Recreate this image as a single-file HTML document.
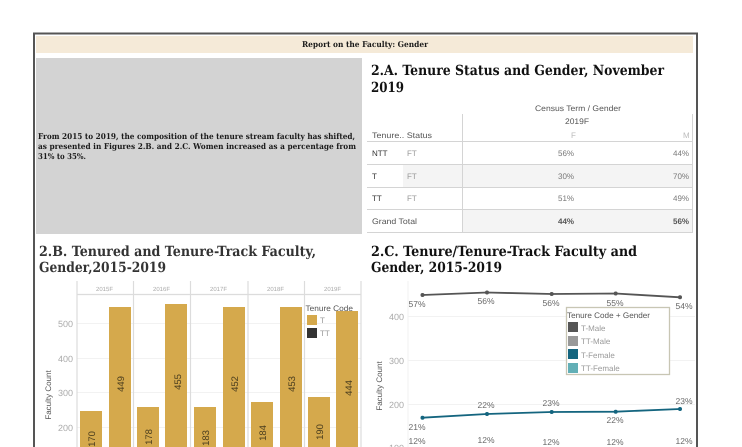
<!DOCTYPE html>
<html><head><meta charset="utf-8"><style>
html,body{margin:0;padding:0;background:#fff;width:742px;height:447px;overflow:hidden}
svg{display:block;position:absolute;left:0;top:0;filter:blur(0.35px)}
.h{font:bold 14px "DejaVu Serif",serif;fill:#111}
.b{font:bold 8px "DejaVu Serif",serif;fill:#1a1a1a}
.s{font:8px "Liberation Sans",sans-serif;fill:#777}
.d{font:8px "Liberation Sans",sans-serif;fill:#333}
.y{font:9px "Liberation Sans",sans-serif;fill:#aaa}
.t{font:6px "Liberation Sans",sans-serif;fill:#aaa}
.v{font:9.5px "Liberation Sans",sans-serif;fill:#4a3d1e}
.p{font:8.5px "Liberation Sans",sans-serif;fill:#666}
.l{font:8px "Liberation Sans",sans-serif;fill:#999}
</style></head><body>
<svg width="742" height="447" viewBox="0 0 742 447" xmlns="http://www.w3.org/2000/svg" text-rendering="geometricPrecision">
<rect width="742" height="447" fill="#fff"/>
<path d="M34 447V33.5H697V447" fill="none" stroke="#555" stroke-width="2"/>
<rect x="36" y="36" width="657" height="17" fill="#f5ead8"/>
<text class="b" x="302" y="47" textLength="126" lengthAdjust="spacingAndGlyphs">Report on the Faculty: Gender</text>
<rect x="36" y="58" width="326" height="176" fill="#d3d3d3"/>
<text class="b" x="38" y="139" textLength="317" lengthAdjust="spacingAndGlyphs">From 2015 to 2019, the composition of the tenure stream faculty has shifted,</text>
<text class="b" x="38" y="149" textLength="318" lengthAdjust="spacingAndGlyphs">as presented in Figures 2.B. and 2.C. Women increased as a percentage from</text>
<text class="b" x="38" y="159" textLength="48" lengthAdjust="spacingAndGlyphs">31% to 35%.</text>

<text class="h" x="371" y="75" textLength="293" lengthAdjust="spacingAndGlyphs">2.A. Tenure Status and Gender, November</text>
<text class="h" x="371" y="92" textLength="33" lengthAdjust="spacingAndGlyphs">2019</text>
<rect x="403" y="164" width="290" height="23" fill="#f4f4f4"/>
<rect x="462" y="209" width="231" height="23" fill="#f4f4f4"/>
<g stroke="#d4d4d4" fill="none"><path d="M367 141.5H693M367 164.5H693M367 187.5H693M367 209.5H693M367 232.5H693M462.5 114V232M692.5 114V232"/></g>
<text class="s" x="535" y="111" textLength="86" lengthAdjust="spacingAndGlyphs" style="fill:#555">Census Term / Gender</text>
<text class="s" x="565" y="124" textLength="24" lengthAdjust="spacingAndGlyphs" style="fill:#555">2019F</text>
<text class="s" x="372" y="138" textLength="60" lengthAdjust="spacingAndGlyphs" style="fill:#555">Tenure.. Status</text>
<text class="s" x="571" y="138" style="fill:#bbb">F</text><text class="s" x="683" y="138" style="fill:#bbb">M</text>
<text class="d" x="372" y="156">NTT</text><text class="s" x="407" y="156" style="fill:#999">FT</text><text class="s" x="558" y="156">56%</text><text class="s" x="673" y="156">44%</text>
<text class="d" x="372" y="179">T</text><text class="s" x="407" y="179" style="fill:#999">FT</text><text class="s" x="558" y="179">30%</text><text class="s" x="673" y="179">70%</text>
<text class="d" x="372" y="201">TT</text><text class="s" x="407" y="201" style="fill:#999">FT</text><text class="s" x="558" y="201">51%</text><text class="s" x="673" y="201">49%</text>
<text class="s" x="372" y="224" textLength="45" lengthAdjust="spacingAndGlyphs" style="fill:#555">Grand Total</text><text class="s" x="558" y="224" style="fill:#555;font-weight:bold">44%</text><text class="s" x="673" y="224" style="fill:#555;font-weight:bold">56%</text>

<text class="h" x="39" y="256" textLength="277" lengthAdjust="spacingAndGlyphs" style="fill:#333">2.B. Tenured and Tenure-Track Faculty,</text>
<text class="h" x="39" y="272" textLength="127" lengthAdjust="spacingAndGlyphs" style="fill:#333">Gender,2015-2019</text>
<g stroke="#f2f2f2" fill="none"><path d="M77 323.5H361M77 358.5H361M77 392.5H361M77 427.5H361"/></g>
<g stroke="#dcdcdc" stroke-width="1.2" fill="none"><path d="M77 294.5H361M77 281V447M133.5 281V447M190.5 281V447M248 281V447M304.5 281V447M361 281V447"/></g>
<text class="t" x="96" y="291">2015F</text><text class="t" x="153" y="291">2016F</text><text class="t" x="210" y="291">2017F</text><text class="t" x="267" y="291">2018F</text><text class="t" x="324" y="291">2019F</text>
<text class="y" x="58" y="327">500</text><text class="y" x="58" y="362">400</text><text class="y" x="58" y="396">300</text><text class="y" x="58" y="431">200</text>
<text class="s" transform="translate(51,395) rotate(-90)" text-anchor="middle" style="fill:#555">Faculty Count</text>
<g fill="#d5a94c"><rect x="80" y="411" width="22" height="36"/><rect x="109" y="307" width="22" height="140"/><rect x="137" y="407" width="22" height="40"/><rect x="165" y="304" width="22" height="143"/><rect x="194" y="407" width="22" height="40"/><rect x="223" y="307" width="22" height="140"/><rect x="251" y="402" width="22" height="45"/><rect x="280" y="307" width="22" height="140"/><rect x="308" y="397" width="22" height="50"/><rect x="336" y="311" width="22" height="136"/></g>
<g text-anchor="middle">
<text class="v" transform="translate(95,439) rotate(-90)">170</text>
<text class="v" transform="translate(124,384) rotate(-90)">449</text>
<text class="v" transform="translate(152,437) rotate(-90)">178</text>
<text class="v" transform="translate(181,382) rotate(-90)">455</text>
<text class="v" transform="translate(209,438) rotate(-90)">183</text>
<text class="v" transform="translate(238,384) rotate(-90)">452</text>
<text class="v" transform="translate(266,433) rotate(-90)">184</text>
<text class="v" transform="translate(295,384) rotate(-90)">453</text>
<text class="v" transform="translate(323,432) rotate(-90)">190</text>
<text class="v" transform="translate(352,388) rotate(-90)">444</text>
</g>
<text class="s" x="305.5" y="311" textLength="47.5" lengthAdjust="spacingAndGlyphs" style="fill:#555">Tenure Code</text>
<rect x="307" y="315" width="10" height="10" fill="#d5a94c"/><rect x="307" y="328" width="10" height="10" fill="#333"/>
<text class="l" x="320" y="323">T</text><text class="l" x="320" y="336">TT</text>

<text class="h" x="371" y="256" textLength="266" lengthAdjust="spacingAndGlyphs">2.C. Tenure/Tenure-Track Faculty and</text>
<text class="h" x="371" y="272" textLength="131" lengthAdjust="spacingAndGlyphs">Gender, 2015-2019</text>
<g stroke="#f2f2f2" fill="none"><path d="M408 316.5H695M408 360.5H695M408 404.5H695M408 281V447"/></g>
<text class="y" x="389" y="320">400</text><text class="y" x="389" y="364">300</text><text class="y" x="389" y="408">200</text>
<text class="y" x="389" y="451">100</text>
<text class="s" transform="translate(382,386) rotate(-90)" text-anchor="middle" style="fill:#555">Faculty Count</text>
<path d="M422.5 295L487 292.5L551.7 294L615.7 293.5L680 297.3" fill="none" stroke="#555" stroke-width="1.8"/>
<g fill="#555"><circle cx="422.5" cy="295" r="2"/><circle cx="487" cy="292.5" r="2"/><circle cx="551.7" cy="294" r="2"/><circle cx="615.7" cy="293.5" r="2"/><circle cx="680" cy="297.3" r="2"/></g>
<path d="M422.5 417.7L487 414L551.7 412L615.7 411.7L680 409" fill="none" stroke="#14657f" stroke-width="1.8"/>
<g fill="#14657f"><circle cx="422.5" cy="417.7" r="2"/><circle cx="487" cy="414" r="2"/><circle cx="551.7" cy="412" r="2"/><circle cx="615.7" cy="411.7" r="2"/><circle cx="680" cy="409" r="2"/></g>
<g text-anchor="middle">
<text class="p" x="417" y="307">57%</text><text class="p" x="486" y="304">56%</text><text class="p" x="551" y="306">56%</text><text class="p" x="615" y="306">55%</text><text class="p" x="684" y="309">54%</text>
<text class="p" x="486" y="408">22%</text><text class="p" x="551" y="406">23%</text><text class="p" x="684" y="404">23%</text><text class="p" x="615" y="423">22%</text><text class="p" x="417" y="430">21%</text>
<text class="p" x="417" y="444">12%</text><text class="p" x="486" y="443">12%</text><text class="p" x="551" y="445">12%</text><text class="p" x="615" y="445">12%</text><text class="p" x="684" y="444">12%</text>
</g>
<rect x="566.5" y="307.5" width="103" height="67" fill="#fff" stroke="#c8c6b4" stroke-width="1.3"/>
<text class="s" x="567" y="318" textLength="83" lengthAdjust="spacingAndGlyphs" style="fill:#555">Tenure Code + Gender</text>
<rect x="568" y="322" width="10" height="10" fill="#555"/><rect x="568" y="336" width="10" height="10" fill="#999"/><rect x="568" y="349" width="10" height="10" fill="#14657f"/><rect x="568" y="363" width="10" height="10" fill="#62afb6"/>
<text class="l" x="581" y="331">T-Male</text><text class="l" x="581" y="344">TT-Male</text><text class="l" x="581" y="358">T-Female</text><text class="l" x="581" y="371">TT-Female</text>
</svg>
</body></html>
